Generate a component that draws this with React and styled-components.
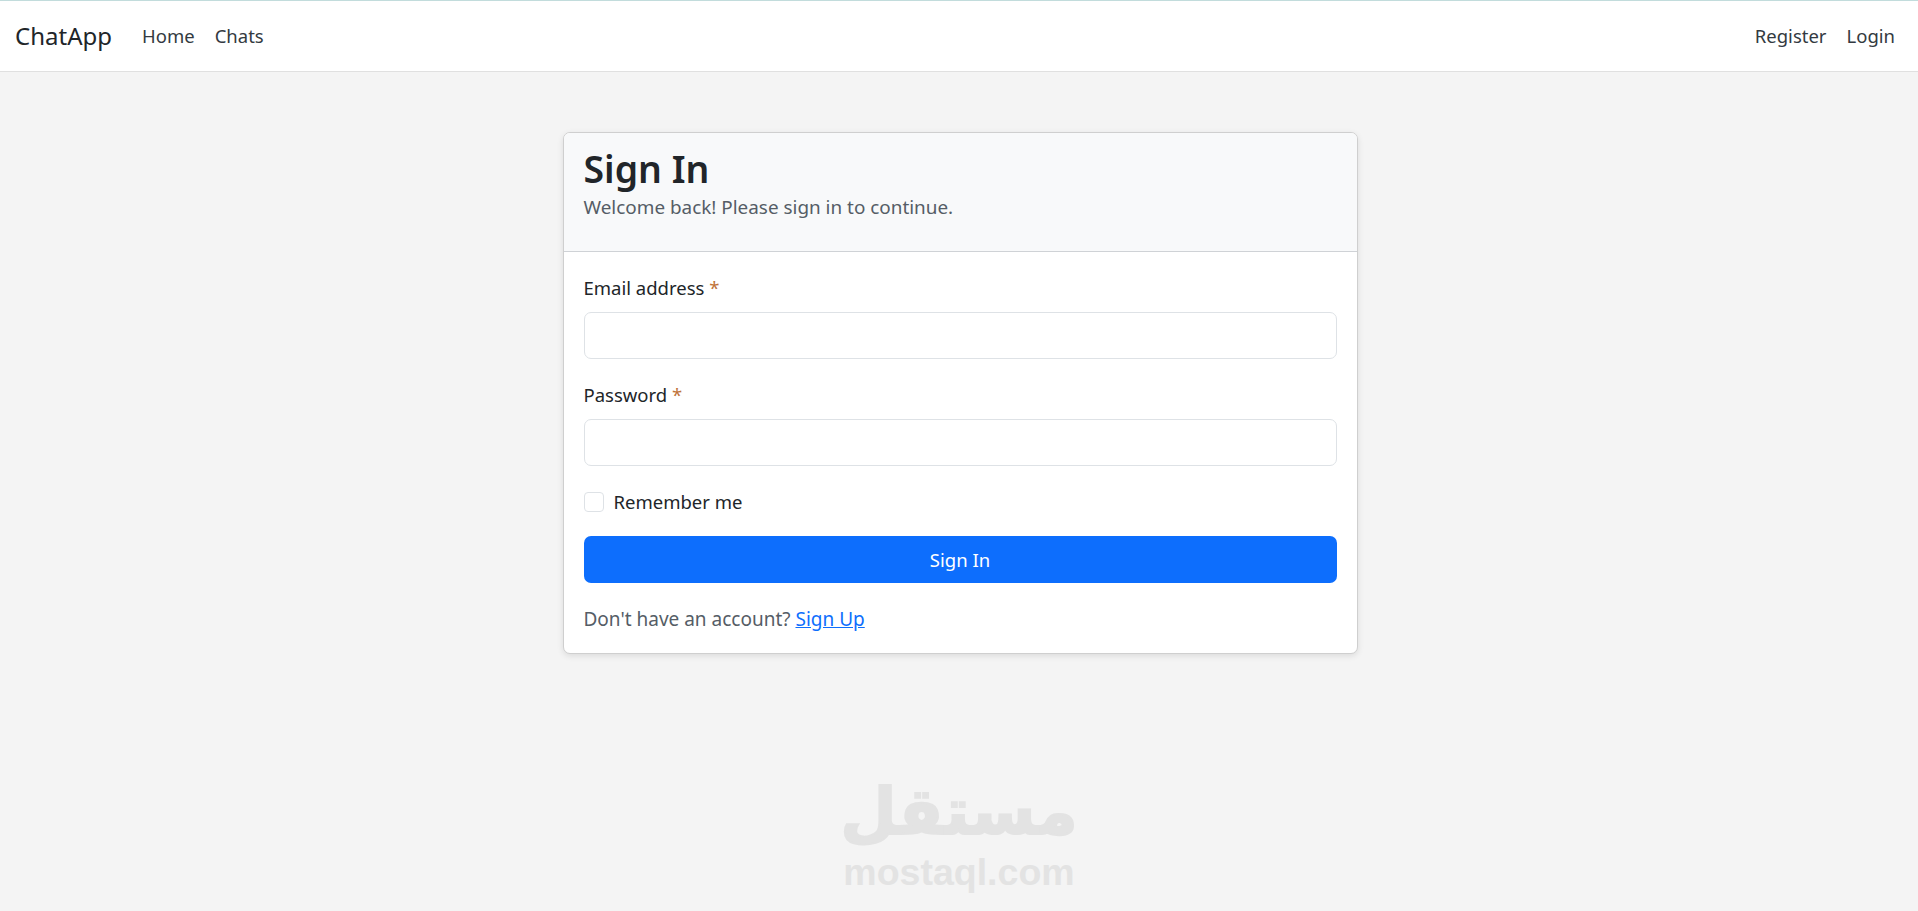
import styled, { createGlobalStyle } from "styled-components";

const GlobalStyle = createGlobalStyle`
  * {
    box-sizing: border-box;
  }
  html,
  body {
    margin: 0;
    padding: 0;
    height: 100%;
  }
  body {
    background: #f4f4f4;
    color: #212529;
    font-family: "Noto Sans", "Open Sans", sans-serif;
    font-size: 18.5px;
    line-height: 1.5;
  }
`;

const Page = styled.div`
  position: relative;
  min-height: 911px;
  overflow: hidden;
`;

const Navbar = styled.nav`
  display: flex;
  align-items: center;
  justify-content: space-between;
  height: 72px;
  padding: 0 23px 0 15px;
  background: #fff;
  border-top: 1px solid #c2dcdc;
  border-bottom: 1px solid #e0e0e0;
`;

const NavGroup = styled.div`
  display: flex;
  align-items: center;
  gap: 20px;
`;

const Brand = styled.a`
  margin-right: 10px;
  font-size: 24px;
  color: #212529;
  text-decoration: none;
`;

const NavLink = styled.a`
  color: #333a41;
  text-decoration: none;
`;

const Main = styled.main`
  display: flex;
  justify-content: center;
  padding: 60px 0 0 2px;
`;

const Card = styled.section`
  width: 795px;
  background: #fff;
  border: 1px solid #cfcfcf;
  border-radius: 7px;
  box-shadow: 0 2px 6px rgba(0, 0, 0, 0.1);
  overflow: hidden;
`;

const CardHeader = styled.header`
  height: 119px;
  padding: 14px 20px 0;
  background: #f8f9fa;
  border-bottom: 1px solid #cfd2d6;
`;

const Title = styled.h1`
  margin: 0;
  font-size: 37.4px;
  font-weight: 600;
  line-height: 44px;
  color: #212529;
`;

const Subtitle = styled.p`
  margin: 3px 0 0;
  font-size: 18.9px;
  line-height: 27px;
  color: #555d66;
`;

const CardBody = styled.form`
  padding: 21px 20px 0;
  height: 401px;
`;

const Field = styled.div`
  margin-bottom: 21px;
`;

const Label = styled.label`
  display: block;
  margin-bottom: 10px;
  line-height: 29px;
`;

const Required = styled.span`
  color: #c0733a;
`;

const Input = styled.input`
  display: block;
  width: 100%;
  height: 47px;
  padding: 0 14px;
  background: #fff;
  border: 1px solid #dee2e6;
  border-radius: 7px;
  outline: none;
`;

const CheckRow = styled.label`
  display: flex;
  align-items: center;
  gap: 10px;
  height: 29px;
  margin-bottom: 20px;
`;

const CheckBox = styled.input.attrs({ type: "checkbox" })`
  appearance: none;
  width: 20px;
  height: 20px;
  margin: 0;
  background: #fff;
  border: 1px solid #dee2e6;
  border-radius: 4px;
`;

const SubmitButton = styled.button`
  display: block;
  width: 100%;
  height: 47px;
  padding: 0;
  font: inherit;
  color: #fff;
  background: #0d6efd;
  border: none;
  border-radius: 7px;
`;

const Footnote = styled.p`
  margin: 22px 0 0;
  font-size: 19px;
  line-height: 29px;
  color: #555d66;
`;

const FootLink = styled.a`
  color: #0d6efd;
  text-decoration: underline;
`;

const Watermark = styled.div`
  position: absolute;
  left: 50%;
  top: 770px;
  width: 240px;
  margin-left: -120px;
  text-align: center;
  color: #e3e3e3;
  font-weight: 700;
  pointer-events: none;
`;

const WatermarkArabic = styled.div`
  font-family: "DejaVu Sans", sans-serif;
  font-size: 65px;
  line-height: 83px;
  -webkit-text-stroke: 2px #e3e3e3;
`;

const WatermarkLatin = styled.div`
  font-family: "Liberation Sans", sans-serif;
  font-size: 37.5px;
  line-height: 38px;
`;

export default function App() {
  return (
    <Page>
      <GlobalStyle />
      <Navbar>
        <NavGroup>
          <Brand href="#">ChatApp</Brand>
          <NavLink href="#">Home</NavLink>
          <NavLink href="#">Chats</NavLink>
        </NavGroup>
        <NavGroup>
          <NavLink href="#">Register</NavLink>
          <NavLink href="#">Login</NavLink>
        </NavGroup>
      </Navbar>
      <Main>
        <Card>
          <CardHeader>
            <Title>Sign In</Title>
            <Subtitle>Welcome back! Please sign in to continue.</Subtitle>
          </CardHeader>
          <CardBody>
            <Field>
              <Label>
                Email address <Required>*</Required>
              </Label>
              <Input type="email" />
            </Field>
            <Field>
              <Label>
                Password <Required>*</Required>
              </Label>
              <Input type="password" />
            </Field>
            <CheckRow>
              <CheckBox />
              Remember me
            </CheckRow>
            <SubmitButton type="button">Sign In</SubmitButton>
            <Footnote>
              Don't have an account? <FootLink href="#">Sign Up</FootLink>
            </Footnote>
          </CardBody>
        </Card>
      </Main>
      <Watermark>
        <WatermarkArabic>مستقل</WatermarkArabic>
        <WatermarkLatin>mostaql.com</WatermarkLatin>
      </Watermark>
    </Page>
  );
}
